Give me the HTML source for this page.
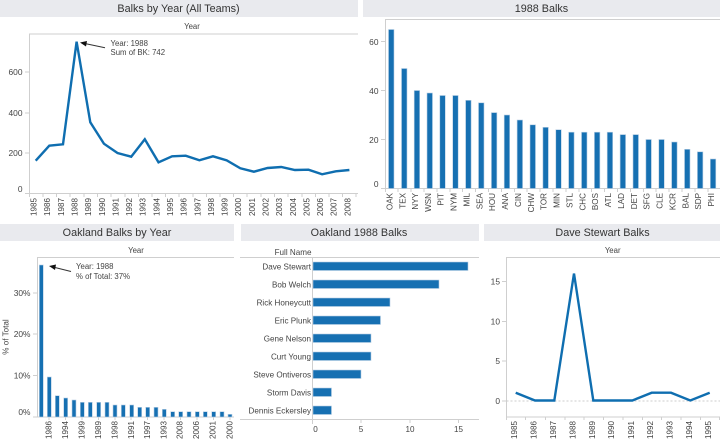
<!DOCTYPE html>
<html><head><meta charset="utf-8"><style>
html,body{margin:0;padding:0;background:#fff;width:720px;height:441px;overflow:hidden}
svg{display:block;filter:blur(.3px)}
text{font-family:"Liberation Sans",sans-serif;fill:#444;font-size:8.1px}
.t{font-size:10.8px;fill:#333;text-anchor:middle}
.m{text-anchor:middle}.e{text-anchor:end}
.v{font-size:8.4px}
.s{font-size:7.8px;fill:#444}
.a{fill:none;stroke:#cfcfcf;stroke-width:1}
.b{fill:#1670b2;stroke:#b8cfe4;stroke-width:.6}
.l{fill:none;stroke:#0f6eb0;stroke-width:2.4;stroke-linejoin:miter}
</style></head><body>
<svg width="720" height="441" viewBox="0 0 720 441" xmlns="http://www.w3.org/2000/svg">
<!-- headers -->
<g fill="#e9eaee">
<rect x="0" y="0" width="358" height="17"/><rect x="363" y="0" width="357" height="17"/>
<rect x="0" y="224" width="234" height="17"/><rect x="241" y="224" width="238" height="17"/><rect x="484" y="224" width="236" height="17"/>
</g>
<text class="t" x="178.500" y="12">Balks by Year (All Teams)</text>
<text class="t" x="541.500" y="12">1988 Balks</text>
<text class="t" x="117" y="236">Oakland Balks by Year</text>
<text class="t" x="359" y="236">Oakland 1988 Balks</text>
<text class="t" x="602.500" y="236">Dave Stewart Balks</text>

<!-- panel 1 -->
<text class="m s" x="192" y="29">Year</text>
<path class="a" d="M358 34H29.500V193.500H358M25 72H29M25 113H29M25 153H29M25 193.500H29M29.500 193.500V197M43 193.500V197M56.500 193.500V197M70 193.500V197M84 193.500V197M97.500 193.500V197M111 193.500V197M125 193.500V197M138.500 193.500V197M152 193.500V197M165.500 193.500V197M179 193.500V197M193 193.500V197M206.500 193.500V197M220 193.500V197M233.500 193.500V197M247 193.500V197M261 193.500V197M274.500 193.500V197M288 193.500V197M302 193.500V197M315.500 193.500V197M329 193.500V197M342.500 193.500V197M356 193.500V197"/>
<text class="e v" x="22.500" y="75">600</text><text class="e v" x="22.500" y="116">400</text><text class="e v" x="22.500" y="156">200</text><text class="e v" x="22.500" y="192">0</text>
<polyline class="l" points="35.700,160.700 49.300,145.700 63,144.300 76.600,41.700 90.300,122.300 103.900,143.700 117.500,153 131.200,156.700 144.800,139.300 158.500,162.300 172.100,156.300 185.700,155.700 199.400,160.300 213,156.300 226.700,160.300 240.300,168.300 253.900,171.700 267.600,168 281.200,167 294.900,170 308.500,169.700 322.100,174.300 335.800,171.300 349.400,170"/>
<path d="M105 47.800L86 43.800" stroke="#333" stroke-width="1" fill="none"/><path d="M80 42.500L87 41L86 46.500Z" fill="#111"/>
<text class="s" x="110.500" y="46">Year: 1988</text><text class="s" x="110.500" y="55">Sum of BK: 742</text>
<g transform="translate(-1.800 0)">
<text class="e" transform="translate(38.500,198) rotate(-90)">1985</text>
<text class="e" transform="translate(52,198) rotate(-90)">1986</text>
<text class="e" transform="translate(65.700,198) rotate(-90)">1987</text>
<text class="e" transform="translate(79.300,198) rotate(-90)">1988</text>
<text class="e" transform="translate(93,198) rotate(-90)">1989</text>
<text class="e" transform="translate(106.600,198) rotate(-90)">1990</text>
<text class="e" transform="translate(120.200,198) rotate(-90)">1991</text>
<text class="e" transform="translate(133.900,198) rotate(-90)">1992</text>
<text class="e" transform="translate(147.500,198) rotate(-90)">1993</text>
<text class="e" transform="translate(161.200,198) rotate(-90)">1994</text>
<text class="e" transform="translate(174.800,198) rotate(-90)">1995</text>
<text class="e" transform="translate(188.400,198) rotate(-90)">1996</text>
<text class="e" transform="translate(202.100,198) rotate(-90)">1997</text>
<text class="e" transform="translate(215.700,198) rotate(-90)">1998</text>
<text class="e" transform="translate(229.400,198) rotate(-90)">1999</text>
<text class="e" transform="translate(243,198) rotate(-90)">2000</text>
<text class="e" transform="translate(256.600,198) rotate(-90)">2001</text>
<text class="e" transform="translate(270.300,198) rotate(-90)">2002</text>
<text class="e" transform="translate(283.900,198) rotate(-90)">2003</text>
<text class="e" transform="translate(297.600,198) rotate(-90)">2004</text>
<text class="e" transform="translate(311.200,198) rotate(-90)">2005</text>
<text class="e" transform="translate(324.800,198) rotate(-90)">2006</text>
<text class="e" transform="translate(338.500,198) rotate(-90)">2007</text>
<text class="e" transform="translate(352.100,198) rotate(-90)">2008</text>
</g>

<!-- panel 2 -->
<path class="a" d="M720 19.500H385.500V188.500H720M381 41.500H385M381 90.500H385M381 139.500H385M381 188.500H385M385.500 188.500V192M398 188.500V192M411 188.500V192M424 188.500V192M437 188.500V192M450 188.500V192M462.500 188.500V192M475.500 188.500V192M488.500 188.500V192M501.500 188.500V192M514.500 188.500V192M527 188.500V192M540 188.500V192M553 188.500V192M566 188.500V192M579 188.500V192M591.500 188.500V192M604.500 188.500V192M617.500 188.500V192M630.500 188.500V192M643.500 188.500V192M656 188.500V192M669 188.500V192M682 188.500V192M695 188.500V192M708 188.500V192"/>
<text class="e v" x="378.500" y="45">60</text><text class="e v" x="378.500" y="94">40</text><text class="e v" x="378.500" y="143">20</text><text class="e v" x="378.500" y="187">0</text>
<g class="b">
<rect x="388.500" y="29.500" width="5.500" height="159"/><rect x="401.500" y="68.500" width="5.500" height="120"/><rect x="414.200" y="90.500" width="5.500" height="98"/><rect x="427" y="93" width="5.500" height="95.500"/><rect x="439.800" y="95.500" width="5.500" height="93"/><rect x="452.700" y="95.500" width="5.500" height="93"/><rect x="465.600" y="100.300" width="5.500" height="88.200"/><rect x="478.500" y="102.800" width="5.500" height="85.700"/><rect x="491.400" y="112.600" width="5.500" height="75.900"/><rect x="504.200" y="115" width="5.500" height="73.500"/><rect x="517.100" y="120" width="5.500" height="68.500"/><rect x="530" y="124.800" width="5.500" height="63.700"/><rect x="542.900" y="127.300" width="5.500" height="61.200"/><rect x="555.800" y="129.700" width="5.500" height="58.800"/><rect x="568.600" y="132.200" width="5.500" height="56.300"/><rect x="581.500" y="132.200" width="5.500" height="56.300"/><rect x="594.400" y="132.200" width="5.500" height="56.300"/><rect x="607.200" y="132.200" width="5.500" height="56.300"/><rect x="620.100" y="134.600" width="5.500" height="53.900"/><rect x="633" y="134.600" width="5.500" height="53.900"/><rect x="645.900" y="139.500" width="5.500" height="49"/><rect x="658.800" y="139.500" width="5.500" height="49"/><rect x="671.600" y="142" width="5.500" height="46.500"/><rect x="684.500" y="149.300" width="5.500" height="39.200"/><rect x="697.400" y="151.800" width="5.500" height="36.700"/><rect x="710.300" y="159" width="5.500" height="29.500"/>
</g>
<g transform="translate(-1.700 0)">
<text class="e" transform="translate(394,193) rotate(-90)">OAK</text>
<text class="e" transform="translate(407,193) rotate(-90)">TEX</text>
<text class="e" transform="translate(419.700,193) rotate(-90)">NYY</text>
<text class="e" transform="translate(432.500,193) rotate(-90)">WSN</text>
<text class="e" transform="translate(445.300,193) rotate(-90)">PIT</text>
<text class="e" transform="translate(458.200,193) rotate(-90)">NYM</text>
<text class="e" transform="translate(471.100,193) rotate(-90)">MIL</text>
<text class="e" transform="translate(484,193) rotate(-90)">SEA</text>
<text class="e" transform="translate(496.900,193) rotate(-90)">HOU</text>
<text class="e" transform="translate(509.700,193) rotate(-90)">ANA</text>
<text class="e" transform="translate(522.600,193) rotate(-90)">CIN</text>
<text class="e" transform="translate(535.500,193) rotate(-90)">CHW</text>
<text class="e" transform="translate(548.400,193) rotate(-90)">TOR</text>
<text class="e" transform="translate(561.300,193) rotate(-90)">MIN</text>
<text class="e" transform="translate(574.100,193) rotate(-90)">STL</text>
<text class="e" transform="translate(587,193) rotate(-90)">CHC</text>
<text class="e" transform="translate(599.900,193) rotate(-90)">BOS</text>
<text class="e" transform="translate(612.700,193) rotate(-90)">ATL</text>
<text class="e" transform="translate(625.600,193) rotate(-90)">LAD</text>
<text class="e" transform="translate(638.500,193) rotate(-90)">DET</text>
<text class="e" transform="translate(651.400,193) rotate(-90)">SFG</text>
<text class="e" transform="translate(664.300,193) rotate(-90)">CLE</text>
<text class="e" transform="translate(677.100,193) rotate(-90)">KCR</text>
<text class="e" transform="translate(690,193) rotate(-90)">BAL</text>
<text class="e" transform="translate(702.900,193) rotate(-90)">SDP</text>
<text class="e" transform="translate(715.800,193) rotate(-90)">PHI</text>
</g>

<!-- panel 3 -->
<text class="m s" x="136" y="253">Year</text>
<path class="a" d="M234 257.500H37.500V417H234M33 293H37M33 334H37M33 375.500H37M33 417H37M49 417V420M65.500 417V420M82 417V420M98.500 417V420M115 417V420M131 417V420M147.500 417V420M164 417V420M180.500 417V420M197 417V420M213.500 417V420M230 417V420"/>
<text class="e v" x="30.500" y="296">30%</text><text class="e v" x="30.500" y="337">20%</text><text class="e v" x="30.500" y="378.500">10%</text><text class="e v" x="30.500" y="415">0%</text>
<text class="m" transform="translate(8.500,337) rotate(-90)">% of Total</text>
<g class="b">
<rect x="39.300" y="265" width="4" height="152"/><rect x="47.300" y="377" width="4" height="40"/><rect x="55.300" y="395.700" width="4" height="21.300"/><rect x="63.700" y="398" width="4" height="19"/><rect x="72" y="400" width="4" height="17"/><rect x="80.300" y="402.300" width="4" height="14.700"/><rect x="88.300" y="402.300" width="4" height="14.700"/><rect x="96.700" y="402.300" width="4" height="14.700"/><rect x="105" y="402.300" width="4" height="14.700"/><rect x="113" y="405" width="4" height="12"/><rect x="121.300" y="405" width="4" height="12"/><rect x="129.700" y="405" width="4" height="12"/><rect x="137.700" y="407.300" width="4" height="9.700"/><rect x="145.700" y="407.300" width="4" height="9.700"/><rect x="154" y="407.300" width="4" height="9.700"/><rect x="162.300" y="409.300" width="4" height="7.700"/><rect x="170.700" y="411.700" width="4" height="5.300"/><rect x="178.700" y="411.700" width="4" height="5.300"/><rect x="187" y="411.700" width="4" height="5.300"/><rect x="195.300" y="411.700" width="4" height="5.300"/><rect x="203.300" y="411.700" width="4" height="5.300"/><rect x="211.700" y="411.700" width="4" height="5.300"/><rect x="220" y="411.700" width="4" height="5.300"/><rect x="228" y="414.300" width="4" height="2.700"/>
</g>
<path d="M71 271.500L55 267.500" stroke="#333" stroke-width="1" fill="none"/><path d="M49 266L56 264.500L55 270Z" fill="#111"/>
<text class="s" x="76" y="269">Year: 1988</text><text class="s" x="76" y="279">% of Total: 37%</text>
<g transform="translate(-.600 0)">
<text class="e" transform="translate(52,421) rotate(-90)">1986</text>
<text class="e" transform="translate(68.500,421) rotate(-90)">1994</text>
<text class="e" transform="translate(85,421) rotate(-90)">1999</text>
<text class="e" transform="translate(101.500,421) rotate(-90)">1989</text>
<text class="e" transform="translate(118,421) rotate(-90)">1998</text>
<text class="e" transform="translate(134.500,421) rotate(-90)">1991</text>
<text class="e" transform="translate(150.500,421) rotate(-90)">1997</text>
<text class="e" transform="translate(167,421) rotate(-90)">1993</text>
<text class="e" transform="translate(183,421) rotate(-90)">2008</text>
<text class="e" transform="translate(199.500,421) rotate(-90)">2006</text>
<text class="e" transform="translate(216,421) rotate(-90)">2001</text>
<text class="e" transform="translate(233,421) rotate(-90)">2000</text>
</g>

<!-- panel 4 -->
<text class="e" x="311.500" y="255">Full Name</text>
<path class="a" d="M240 257.500H479M240 419.500H479M312.500 257.500V424M361 419.500V423M410 419.500V423M458.500 419.500V423"/>
<g class="b">
<rect x="313" y="262" width="155" height="8.500"/><rect x="313" y="280" width="126" height="8.500"/><rect x="313" y="298" width="77" height="8.500"/><rect x="313" y="316" width="67.500" height="8.500"/><rect x="313" y="334" width="58" height="8.500"/><rect x="313" y="352" width="58" height="8.500"/><rect x="313" y="370" width="48" height="8.500"/><rect x="313" y="388" width="18.500" height="8.500"/><rect x="313" y="406" width="18.500" height="8.500"/>
</g>
<text class="e" x="311" y="269.500">Dave Stewart</text>
<text class="e" x="311" y="287.500">Bob Welch</text>
<text class="e" x="311" y="305.500">Rick Honeycutt</text>
<text class="e" x="311" y="323.500">Eric Plunk</text>
<text class="e" x="311" y="341.500">Gene Nelson</text>
<text class="e" x="311" y="359.500">Curt Young</text>
<text class="e" x="311" y="377.500">Steve Ontiveros</text>
<text class="e" x="311" y="395.500">Storm Davis</text>
<text class="e" x="311" y="413.500">Dennis Eckersley</text>
<text class="m" x="315.500" y="432">0</text><text class="m" x="361" y="432">5</text><text class="m" x="410" y="432">10</text><text class="m" x="458.500" y="432">15</text>

<!-- panel 5 -->
<text class="m s" x="612.700" y="253">Year</text>
<path class="a" d="M720 257.500H506.500V417H720M502 281.500H506M502 321.500H506M502 361H506M502 401H506M506.500 417V420M525.500 417V420M545.500 417V420M565 417V420M584 417V420M603.500 417V420M623 417V420M642.500 417V420M661.500 417V420M681 417V420M700.500 417V420M719.500 417V420"/>
<path d="M506.500 401H720" stroke="#ccc" stroke-width="1" stroke-dasharray="2 2" fill="none"/>
<text class="e v" x="500" y="284.500">15</text><text class="e v" x="500" y="324.500">10</text><text class="e v" x="500" y="364">5</text><text class="e v" x="500" y="404">0</text>
<polyline class="l" points="515.700,392.700 535,400.500 554.300,400.500 574,273.500 593.300,400.500 612.700,400.500 632.300,400.500 651.700,392.700 671,392.700 690.300,400.500 709.700,392.700"/>
<g transform="translate(-1.500 0)">
<text class="e" transform="translate(518.500,421) rotate(-90)">1985</text>
<text class="e" transform="translate(538,421) rotate(-90)">1986</text>
<text class="e" transform="translate(557.300,421) rotate(-90)">1987</text>
<text class="e" transform="translate(577,421) rotate(-90)">1988</text>
<text class="e" transform="translate(596.300,421) rotate(-90)">1989</text>
<text class="e" transform="translate(615.700,421) rotate(-90)">1990</text>
<text class="e" transform="translate(635.300,421) rotate(-90)">1991</text>
<text class="e" transform="translate(654.700,421) rotate(-90)">1992</text>
<text class="e" transform="translate(674,421) rotate(-90)">1993</text>
<text class="e" transform="translate(693.300,421) rotate(-90)">1994</text>
<text class="e" transform="translate(712.700,421) rotate(-90)">1995</text>
</g>
</svg>
</body></html>
